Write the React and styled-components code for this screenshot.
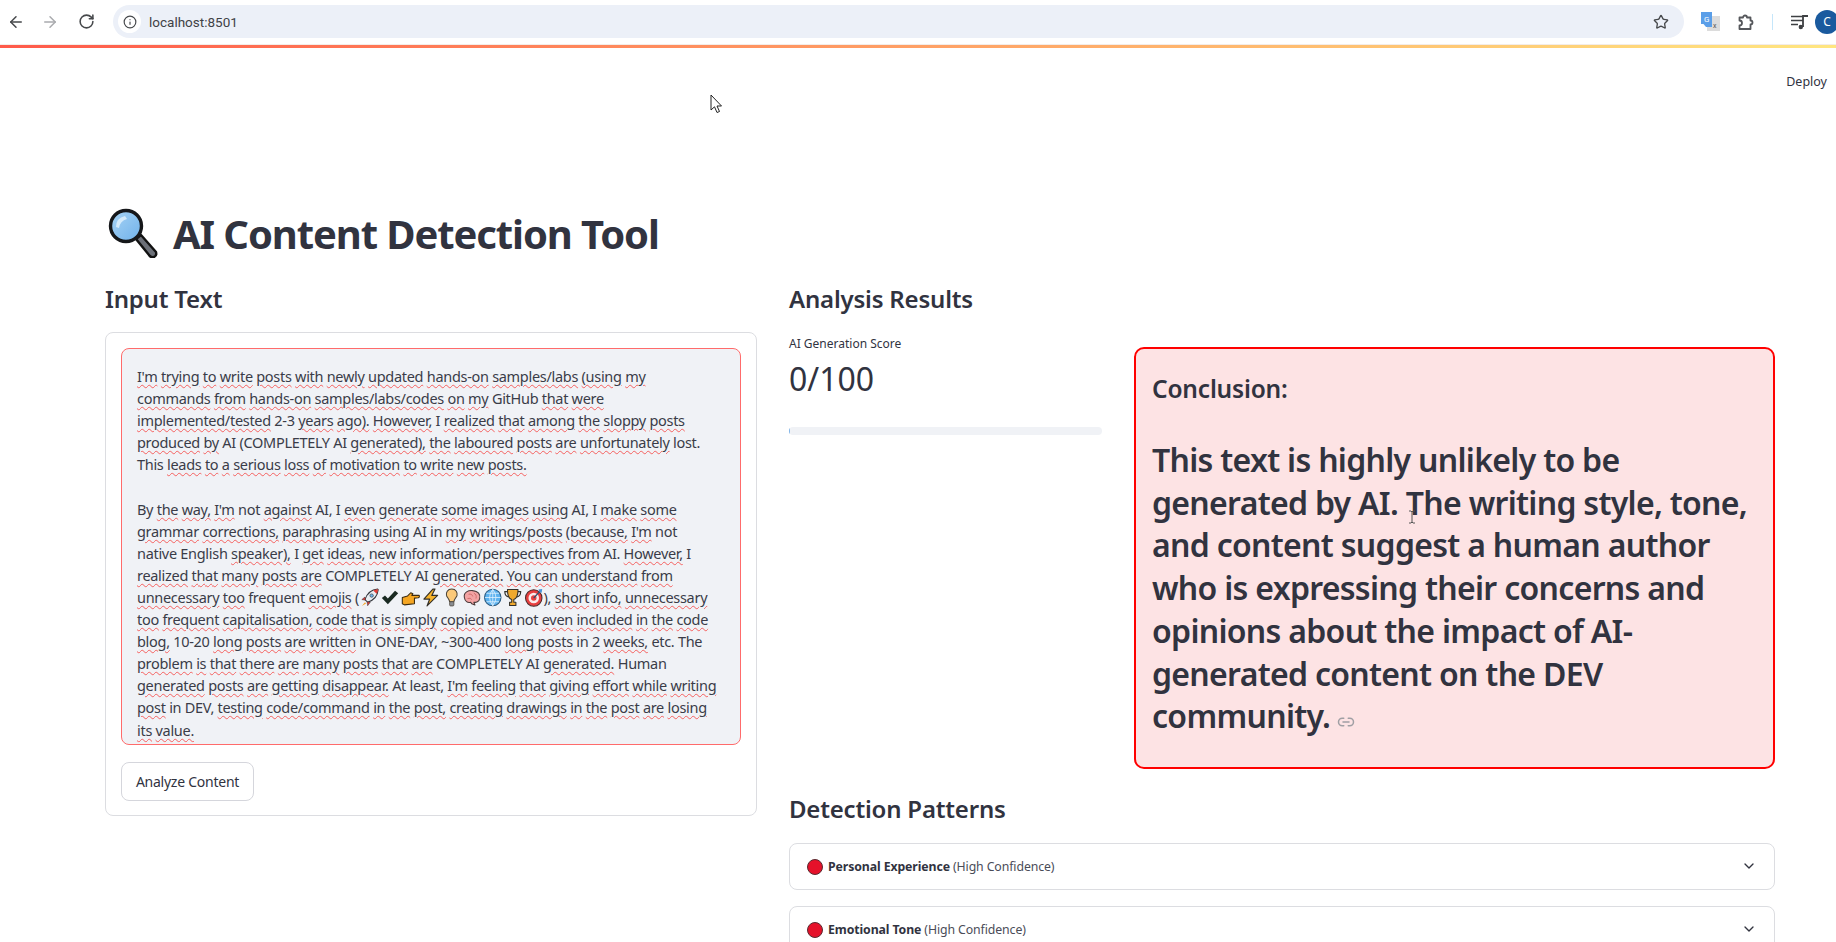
import React from "react";
import styled, { createGlobalStyle } from "styled-components";
import { ArrowLeft, ArrowRight, RotateCw, Info, Star, ChevronDown, Link2 } from "lucide-react";

const GlobalStyle = createGlobalStyle`
    html, body {
        margin: 0;
        padding: 0;
        background: #fff;
        color: #31333f;
        font-family: "Noto Sans", "Liberation Sans", sans-serif;
        height: 942px;
        overflow: hidden;
    }
`;

const Page = styled.div`
    position: relative;
    width: 1836px;
    height: 942px;
    overflow: hidden;
`;

const Chrome = styled.div`
    height: 45px;
    display: flex;
    align-items: center;
    padding-left: 7px;
    overflow: hidden;
    box-sizing: border-box;
    padding-bottom: 2px;
    & > * {
        flex: none;
    }
`;

const NavButton = styled.div`
    width: 18px;
    height: 18px;
    margin-right: ${props => props.$gap || 16}px;
    color: ${props => props.$off ? "#a9abae" : "#46484b"};
    display: flex;
`;

const UrlPill = styled.div`
    width: 1571px;
    height: 33px;
    background: #ecf0f8;
    border-radius: 17px;
    display: flex;
    align-items: center;
    padding: 0 15px 0 5px;
    box-sizing: border-box;
`;

const InfoDot = styled.div`
    width: 23px;
    height: 23px;
    border-radius: 50%;
    background: #fff;
    color: #46484b;
    display: flex;
    align-items: center;
    justify-content: center;
    margin-right: 8px;
`;

const UrlText = styled.span`
    font-family: "Roboto", sans-serif;
    font-size: 13.5px;
    color: #3f4246;
    flex: 1;
`;

const ToolIcon = styled.div`
    display: flex;
    align-items: center;
    justify-content: center;
    width: 20px;
    height: 20px;
    color: #55575b;
    margin-left: ${props => props.$left}px;
`;

const Divider = styled.div`
    width: 1px;
    height: 16px;
    background: #c5e6fa;
    margin-left: 16px;
`;

const Avatar = styled.div`
    width: 24px;
    height: 24px;
    border-radius: 50%;
    background: #1a5a9e;
    color: #fff;
    font-size: 12px;
    display: flex;
    align-items: center;
    justify-content: center;
    margin-left: 5px;
`;

const Decoration = styled.div`
    height: 3px;
    background: linear-gradient(90deg, #ff5a4a, #ffe680);
    box-shadow: 0 -1px 0 #f3ece8;
`;

const TopBar = styled.div`
    display: flex;
    justify-content: flex-end;
    padding: 25px 9px 0 0;
    height: 42px;
    box-sizing: border-box;
    font-size: 12.5px;
    line-height: 17px;
`;

const Main = styled.main`
    padding: 118px 61px 0 105px;
`;

const Title = styled.h1`
    margin: 0 0 25px;
    display: flex;
    align-items: center;
    gap: 15px;
    height: 50px;
    font-size: 40px;
    font-weight: 700;
    letter-spacing: -1.1px;
    svg {
        flex: none;
        margin-left: 3px;
    }
`;

const Columns = styled.div`
    display: grid;
    grid-template-columns: 652px 986px;
    gap: 32px;
`;

const Heading = styled.h2`
    margin: ${props => props.$top || 0}px 0 ${props => props.$bottom || 0}px;
    font-size: 24px;
    line-height: 32px;
    font-weight: 600;
    letter-spacing: -0.2px;
`;

const Card = styled.section`
    border: 1px solid #dcdde1;
    border-radius: 8px;
    padding: 15px 15px 14px;
    height: 484px;
    box-sizing: border-box;
`;

const TextArea = styled.div`
    height: 397px;
    box-sizing: border-box;
    background: #f0f2f6;
    border: 1px solid #ff6b6b;
    border-radius: 8px;
    padding: 16px 10px 0 15px;
    font-size: 14.5px;
    line-height: 22.1px;
    letter-spacing: -0.3px;
    white-space: nowrap;
    overflow: hidden;
    color: #3a3c48;
`;

const TextLine = styled.div`
    height: 22.1px;
`;

const Misspelled = styled.span`
    text-decoration: underline wavy #f5605f 1px;
    text-underline-offset: 2px;
`;

const AnalyzeButton = styled.button`
    display: block;
    margin-top: 17px;
    width: 133px;
    height: 39px;
    background: #fff;
    border: 1px solid #d5d6dc;
    border-radius: 8px;
    font-family: inherit;
    font-size: 14px;
    letter-spacing: -0.25px;
    color: #31333f;
    padding: 0;
`;

const ResultRow = styled.div`
    display: grid;
    grid-template-columns: 313px 641px;
    gap: 32px;
    height: 454px;
`;

const ScoreLabel = styled.div`
    font-size: 12px;
    line-height: 16px;
    padding-top: 21px;
`;

const ScoreValue = styled.div`
    font-size: 32px;
    line-height: 40px;
    margin-top: 7px;
`;

const Track = styled.div`
    height: 8px;
    margin-top: 28px;
    background: #f0f2f6;
    border-radius: 8px;
    overflow: hidden;
`;

const TrackFill = styled.div`
    width: 1px;
    height: 100%;
    background: #7fb4e8;
`;

const Conclusion = styled.div`
    margin-top: 32px;
    height: 422px;
    box-sizing: border-box;
    background: #fde3e4;
    border: 2px solid #f00;
    border-radius: 10px;
    padding: 22px 16px 0;
`;

const ConclusionLabel = styled.div`
    font-size: 24.5px;
    line-height: 36px;
    font-weight: 600;
    letter-spacing: -0.2px;
`;

const ConclusionBody = styled.div`
    margin-top: 32px;
    font-size: 32px;
    line-height: 42.7px;
    font-weight: 600;
    letter-spacing: -0.7px;
    white-space: nowrap;
    svg {
        margin-left: 7px;
        vertical-align: -3px;
        color: #a09fa4;
    }
`;

const Expander = styled.div`
    height: 47px;
    box-sizing: border-box;
    margin-top: 16px;
    border: 1px solid #dcdde1;
    border-radius: 8px;
    padding: 0 17px 0 17px;
    display: flex;
    align-items: center;
    font-size: 12.3px;
    letter-spacing: -0.1px;
    color: #4a4c58;
    &:first-of-type {
        margin-top: 0;
    }
`;

const Dot = styled.span`
    width: 16px;
    height: 16px;
    flex: none;
    border-radius: 50%;
    background: #e5112a;
    border: 1px solid #5a2a30;
    box-sizing: border-box;
    margin-right: 5px;
`;

const PatternName = styled.b`
    font-weight: 700;
    color: #31333f;
    margin-right: 3px;
`;

const ExpanderChevron = styled.div`
    margin-left: auto;
    margin-top: -2px;
    display: flex;
    color: #31333f;
`;

const Overlay = styled.div`
    position: absolute;
    left: ${props => props.$x}px;
    top: ${props => props.$y}px;
    display: flex;
`;

const InlineEmoji = styled.svg`
    width: 19.5px;
    height: 19px;
    margin: 0 0.5px;
    vertical-align: -4px;
`;

const MagnifierIcon = () => (
    <svg width="50" height="50" viewBox="0 0 50 50">
        <defs>
            <linearGradient id="lens" x1="0" y1="0" x2="1" y2="1">
                <stop offset="0" stopColor="#a9d4f5" />
                <stop offset="1" stopColor="#6fb1ea" />
            </linearGradient>
        </defs>
        <path d="M28 31 L33 27 L48 44 Q49 48 46 49 Q43 50 41 47 Z" fill="#6c7078" stroke="#111" strokeWidth="2.4" strokeLinejoin="round" />
        <circle cx="18" cy="18" r="15.5" fill="url(#lens)" stroke="#15171a" strokeWidth="3.4" />
        <path d="M8 19 Q8 10 17 8 L19 11 Q12 13 11 20 Z" fill="#d5ebfb" />
    </svg>
);

const TranslateIcon = () => (
    <svg width="20" height="20" viewBox="0 0 20 20">
        <rect x="7" y="4" width="13" height="15" fill="#dcdcdc" />
        <path d="M1 0 H12 V15 H6 L3.5 12 H1 Z" fill="#5a9ee8" />
        <text x="4" y="10" fontSize="8" fill="#fff" fontFamily="Roboto">G</text>
        <text x="13" y="16" fontSize="7" fill="#555" fontFamily="Roboto">x</text>
    </svg>
);

const ExtensionIcon = () => (
    <svg width="20" height="20" viewBox="0 0 20 20" fill="none" stroke="currentColor" strokeWidth="1.8" strokeLinejoin="round">
        <path d="M3.5 5.5 H7 a2 2 0 0 1 4 0 H14.5 V8.5 a2 2 0 0 1 0 4 V17 H3.5 V13.5 a2.5 2.5 0 0 0 0 -5 Z" />
    </svg>
);

const MediaIcon = () => (
    <svg width="20" height="18" viewBox="0 0 20 18" fill="none" stroke="#3e4043" strokeWidth="1.6">
        <path d="M1 3.5 H13 M1 7.5 H13 M1 11.5 H8" />
        <path d="M13 14 V3 H18" strokeWidth="1.8" />
        <circle cx="10.8" cy="14" r="2.2" fill="#3e4043" stroke="none" />
    </svg>
);

const Rocket = () => (
    <InlineEmoji viewBox="0 0 18 18">
        <path d="M16.5 1 C11 1.5 6.5 5 4.5 11 L7 13.5 C13 11.5 16.5 7 17 1.5 Z" fill="#e8edf2" stroke="#33363c" strokeWidth="1" />
        <path d="M16.8 1.2 C15 1.3 13.5 1.8 12.5 2.5 L15.5 5.5 C16.2 4.5 16.7 3 16.8 1.2 Z" fill="#e23b34" />
        <circle cx="10.8" cy="7.2" r="1.6" fill="#6db3e8" stroke="#33363c" strokeWidth=".6" />
        <path d="M4.5 8.5 L1.5 11 L5 11.5 Z M9.5 13.5 L7 16.8 L6.5 13 Z" fill="#e23b34" stroke="#33363c" strokeWidth=".5" />
        <path d="M4.5 13.5 L1.5 17 L5.5 14.8 Z" fill="#f5a524" />
    </InlineEmoji>
);

const Check = () => (
    <InlineEmoji viewBox="0 0 18 18">
        <path d="M1.5 9.5 L4.5 7 L7.2 10 L14 2.5 L17 5 L7.2 15.5 Z" fill="#1a2a22" />
    </InlineEmoji>
);

const Pointing = () => (
    <InlineEmoji viewBox="0 0 18 18">
        <path d="M1 9 L6 7.5 L9 4.5 L11 5.5 L10 7 L17 7 Q17.6 9 16 9.3 L12.5 9.6 L12.5 15 L3 16 L1 15 Z" fill="#f5a623" stroke="#3a2a10" strokeWidth="1" strokeLinejoin="round" />
    </InlineEmoji>
);

const Bolt = () => (
    <InlineEmoji viewBox="0 0 18 18">
        <path d="M11 1 L2.5 10.5 L8 10.5 L5.5 17 L15.5 7 L10 7 L13 1 Z" fill="#f7b32b" stroke="#33302a" strokeWidth="1.1" strokeLinejoin="round" />
    </InlineEmoji>
);

const Bulb = () => (
    <InlineEmoji viewBox="0 0 18 18">
        <path d="M9 1 C4.8 1 3.5 4.5 4 7 C4.5 9 6.5 10 7 13 L11 13 C11.5 10 13.5 9 14 7 C14.5 4.5 13.2 1 9 1 Z" fill="#fbc97a" stroke="#4a4238" strokeWidth="1" />
        <rect x="7" y="13" width="4" height="4" rx="1" fill="#8a8d92" stroke="#4a4238" strokeWidth=".7" />
    </InlineEmoji>
);

const Brain = () => (
    <InlineEmoji viewBox="0 0 18 18">
        <path d="M2 9 C1 4 6 2 10 2.5 C15 3 17.5 6 16.5 10 C16 13 13 14 11 13.5 L12 16 L9 15 L8 13.5 C5 14.5 2.5 12.5 2 9 Z" fill="#f3a3a3" stroke="#4a3a3a" strokeWidth="1" strokeLinejoin="round" />
        <path d="M6 6 Q9 5 10 8 M11 5 Q14 6 13 10 M5 10 Q8 9 9 11" fill="none" stroke="#d06a6a" strokeWidth=".9" />
    </InlineEmoji>
);

const Globe = () => (
    <InlineEmoji viewBox="0 0 18 18">
        <circle cx="9" cy="9" r="7.8" fill="#5db2ef" stroke="#2b5a80" strokeWidth="1" />
        <path d="M1.5 9 H16.5 M9 1.2 V16.8 M3 5 H15 M3 13 H15 M9 1.2 Q3 9 9 16.8 M9 1.2 Q15 9 9 16.8" fill="none" stroke="#e8f5ff" strokeWidth=".7" />
    </InlineEmoji>
);

const Trophy = () => (
    <InlineEmoji viewBox="0 0 18 18">
        <path d="M4 1.5 H14 C14 7 13 10 10 11 V13.5 H12 V16.5 H6 V13.5 H8 V11 C5 10 4 7 4 1.5 Z" fill="#f0a92e" stroke="#33302a" strokeWidth="1" strokeLinejoin="round" />
        <path d="M4 3.5 H1.5 C1.5 7 3 8 5 8.5 M14 3.5 H16.5 C16.5 7 15 8 13 8.5" fill="none" stroke="#33302a" strokeWidth="1.1" />
    </InlineEmoji>
);

const Target = () => (
    <InlineEmoji viewBox="0 0 18 18">
        <circle cx="9" cy="9.5" r="7.8" fill="#e83f3f" stroke="#4a2a2a" strokeWidth="1" />
        <circle cx="9" cy="9.5" r="5" fill="#fbeaea" />
        <circle cx="9" cy="9.5" r="2.6" fill="#e83f3f" />
        <path d="M9 9.5 L15 3" stroke="#31506e" strokeWidth="1.2" />
        <path d="M13.5 1.5 L17 1 L16.5 4.5 L14.5 4 Z" fill="#4a93d8" />
    </InlineEmoji>
);

// words with a leading "=" have no spell-check squiggle
const lines = [
    "I'm trying to write posts with newly updated hands-on samples/labs (using my",
    "commands from hands-on samples/labs/codes on my =GitHub that were",
    "implemented/tested =2-3 years ago). However, =I realized that among the sloppy posts",
    "produced by =AI =(COMPLETELY =AI generated), the laboured posts are unfortunately =lost.",
    "=This leads to a serious loss of motivation to write new posts.",
    "",
    "=By the way, I'm =not against =AI, =I even generate some images using =AI, =I make some",
    "grammar corrections, paraphrasing using =AI =in my writings/posts (because, I'm =not",
    "=native =English speaker), =I get ideas, new information/perspectives from =AI. However, =I",
    "realized that many posts are =COMPLETELY =AI generated. You can understand from",
    "EMOJI",
    "too frequent capitalisation, code that is simply copied and =not even included in the code",
    "blog, =10-20 long posts are written =in =ONE-DAY, =~300-400 long posts =in =2 weeks, =etc. =The",
    "problem is that there are many posts that are =COMPLETELY =AI generated. =Human",
    "generated posts are getting disappear. =At =least, I'm feeling that giving effort while writing",
    "post =in =DEV, testing code/command in the post, creating drawings in the post are losing",
    "its value.",
];

const Words = ({ text }) => text.split(" ").map((word, i) => (
    <React.Fragment key={i}>
        {i > 0 && " "}
        {word.startsWith("=") ? word.slice(1) : <Misspelled>{word}</Misspelled>}
    </React.Fragment>
));

const InputBox = () => (
    <TextArea>
        {lines.map((line, i) => (
            <TextLine key={i}>
                {line === "EMOJI" ? (
                    <>
                        <Words text="unnecessary too =frequent emojis =(" />
                        <Rocket /><Check /><Pointing /><Bolt /><Bulb /><Brain /><Globe /><Trophy /><Target />
                        <Words text="=), short info, unnecessary" />
                    </>
                ) : <Words text={line} />}
            </TextLine>
        ))}
    </TextArea>
);

const Pattern = ({ name }) => (
    <Expander>
        <Dot />
        <PatternName>{name}</PatternName>
        (High Confidence)
        <ExpanderChevron><ChevronDown size={16} strokeWidth={2} /></ExpanderChevron>
    </Expander>
);

const App = () => (
    <Page>
        <GlobalStyle />
        <Chrome>
            <NavButton><ArrowLeft size={18} strokeWidth={2} /></NavButton>
            <NavButton $off $gap={19}><ArrowRight size={18} strokeWidth={2} /></NavButton>
            <NavButton $gap={17}><RotateCw size={17} strokeWidth={2.2} /></NavButton>
            <UrlPill>
                <InfoDot><Info size={14} strokeWidth={2} /></InfoDot>
                <UrlText>localhost:8501</UrlText>
                <Star size={16} strokeWidth={2} color="#46484b" />
            </UrlPill>
            <ToolIcon $left={16}><TranslateIcon /></ToolIcon>
            <ToolIcon $left={16}><ExtensionIcon /></ToolIcon>
            <Divider />
            <ToolIcon $left={17}><MediaIcon /></ToolIcon>
            <Avatar>C</Avatar>
        </Chrome>
        <Decoration />
        <TopBar>Deploy</TopBar>
        <Main>
            <Title><MagnifierIcon />AI Content Detection Tool</Title>
            <Columns>
                <div>
                    <Heading $bottom={17}>Input Text</Heading>
                    <Card>
                        <InputBox />
                        <AnalyzeButton>Analyze Content</AnalyzeButton>
                    </Card>
                </div>
                <div>
                    <Heading>Analysis Results</Heading>
                    <ResultRow>
                        <div>
                            <ScoreLabel>AI Generation Score</ScoreLabel>
                            <ScoreValue>0/100</ScoreValue>
                            <Track><TrackFill /></Track>
                        </div>
                        <Conclusion>
                            <ConclusionLabel>Conclusion:</ConclusionLabel>
                            <ConclusionBody>
                                This text is highly unlikely to be<br />
                                generated by AI. The writing style, tone,<br />
                                and content suggest a human author<br />
                                who is expressing their concerns and<br />
                                opinions about the impact of AI-<br />
                                generated content on the DEV<br />
                                community.<Link2 size={18} strokeWidth={2} />
                            </ConclusionBody>
                        </Conclusion>
                    </ResultRow>
                    <Heading $top={24} $bottom={18}>Detection Patterns</Heading>
                    <Pattern name="Personal Experience" />
                    <Pattern name="Emotional Tone" />
                </div>
            </Columns>
        </Main>
        <Overlay $x={710} $y={94}>
            <svg width="13" height="20" viewBox="0 0 13 20">
                <path d="M1 1 V16 L4.5 12.8 L7 18.5 L9.5 17.5 L7 12 L11.5 12 Z" fill="#fff" stroke="#222" strokeWidth="1" />
            </svg>
        </Overlay>
        <Overlay $x={1408} $y={510}>
            <svg width="8" height="14" viewBox="0 0 8 14">
                <path d="M1 1 H3 L4 2 L5 1 H7 M4 2 V12 M1 13 H3 L4 12 L5 13 H7" fill="none" stroke="#555" strokeWidth="1" />
            </svg>
        </Overlay>
    </Page>
);

export default App;
